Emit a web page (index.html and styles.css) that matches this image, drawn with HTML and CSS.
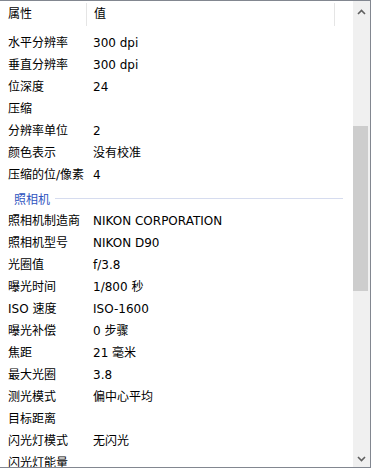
FILE: index.html
```html
<!DOCTYPE html>
<html lang="zh-CN">
<head>
    <meta charset="UTF-8">
    <title>属性</title>
    <link rel="stylesheet" href="styles.css">
</head>
<body>
<div class="panel">
    <div class="list">
        <div class="head">
            <div class="h-name">属性</div>
            <div class="h-value">值</div>
        </div>
        <div class="rows">
            <div class="row"><span class="k">水平分辨率</span><span class="v">300 dpi</span></div>
            <div class="row"><span class="k">垂直分辨率</span><span class="v">300 dpi</span></div>
            <div class="row"><span class="k">位深度</span><span class="v">24</span></div>
            <div class="row"><span class="k">压缩</span><span class="v"></span></div>
            <div class="row"><span class="k">分辨率单位</span><span class="v">2</span></div>
            <div class="row"><span class="k">颜色表示</span><span class="v">没有校准</span></div>
            <div class="row"><span class="k">压缩的位/像素</span><span class="v">4</span></div>
            <div class="group"><span>照相机</span><i class="rule"></i></div>
            <div class="row"><span class="k">照相机制造商</span><span class="v">NIKON CORPORATION</span></div>
            <div class="row"><span class="k">照相机型号</span><span class="v">NIKON D90</span></div>
            <div class="row"><span class="k">光圈值</span><span class="v">f/3.8</span></div>
            <div class="row"><span class="k">曝光时间</span><span class="v">1/800 秒</span></div>
            <div class="row"><span class="k">ISO 速度</span><span class="v">ISO-1600</span></div>
            <div class="row"><span class="k">曝光补偿</span><span class="v">0 步骤</span></div>
            <div class="row"><span class="k">焦距</span><span class="v">21 毫米</span></div>
            <div class="row"><span class="k">最大光圈</span><span class="v">3.8</span></div>
            <div class="row"><span class="k">测光模式</span><span class="v">偏中心平均</span></div>
            <div class="row"><span class="k">目标距离</span><span class="v"></span></div>
            <div class="row"><span class="k">闪光灯模式</span><span class="v">无闪光</span></div>
            <div class="row"><span class="k">闪光灯能量</span><span class="v"></span></div>
        </div>
    </div>
    <div class="scrollbar">
        <div class="arrow">
            <svg width="9" height="6" viewBox="0 0 9 6"><path d="M1 5 L4.5 1.5 L8 5" fill="none" stroke="#606060" stroke-width="1.6"/></svg>
        </div>
        <div class="track">
            <div class="thumb"></div>
        </div>
        <div class="arrow">
            <svg width="9" height="6" viewBox="0 0 9 6"><path d="M1 1 L4.5 4.5 L8 1" fill="none" stroke="#606060" stroke-width="1.6"/></svg>
        </div>
    </div>
</div>
</body>
</html>
```

FILE: styles.css
```css
body {
    margin: 0;
    font-family: "DejaVu Sans", "Noto Sans CJK SC", sans-serif;
    font-size: 12px;
    color: #000;
    background: #fff;
}

.panel {
    width: 371px;
    height: 468px;
    box-sizing: border-box;
    border: 1px solid #828790;
    border-left: none;
    display: flex;
    overflow: hidden;
}

.list {
    flex: 1;
    overflow: hidden;
}

.head {
    display: flex;
    height: 26px;
    align-items: center;
}
.h-name {
    width: 78px;
    padding-left: 8px;
    height: 23px;
    line-height: 23px;
    border-right: 1px solid #e5e5e5;
}
.h-value {
    width: 240px;
    padding-left: 7px;
    height: 23px;
    line-height: 23px;
    border-right: 1px solid #e5e5e5;
}

.rows {
    padding-top: 5px;
}
.row {
    display: flex;
    height: 22px;
    line-height: 22px;
    white-space: nowrap;
}
.k {
    width: 85px;
    padding-left: 8px;
}

.group {
    display: flex;
    align-items: center;
    height: 24px;
    padding-left: 14px;
    padding-right: 10px;
    color: #2f55c0;
}
.rule {
    flex: 1;
    height: 1px;
    margin-left: 5px;
    margin-top: 1px;
    background: #d6dcef;
}

.scrollbar {
    width: 17px;
    background: #f0f0f0;
    display: flex;
    flex-direction: column;
}
.arrow {
    height: 17px;
    display: flex;
    align-items: center;
    justify-content: center;
    padding-top: 2px;
}
.arrow:last-child {
    padding-top: 0;
    padding-bottom: 0;
}
.track {
    flex: 1;
    padding-top: 106px;
}
.thumb {
    width: 15px;
    height: 165px;
    background: #cdcdcd;
}
```
